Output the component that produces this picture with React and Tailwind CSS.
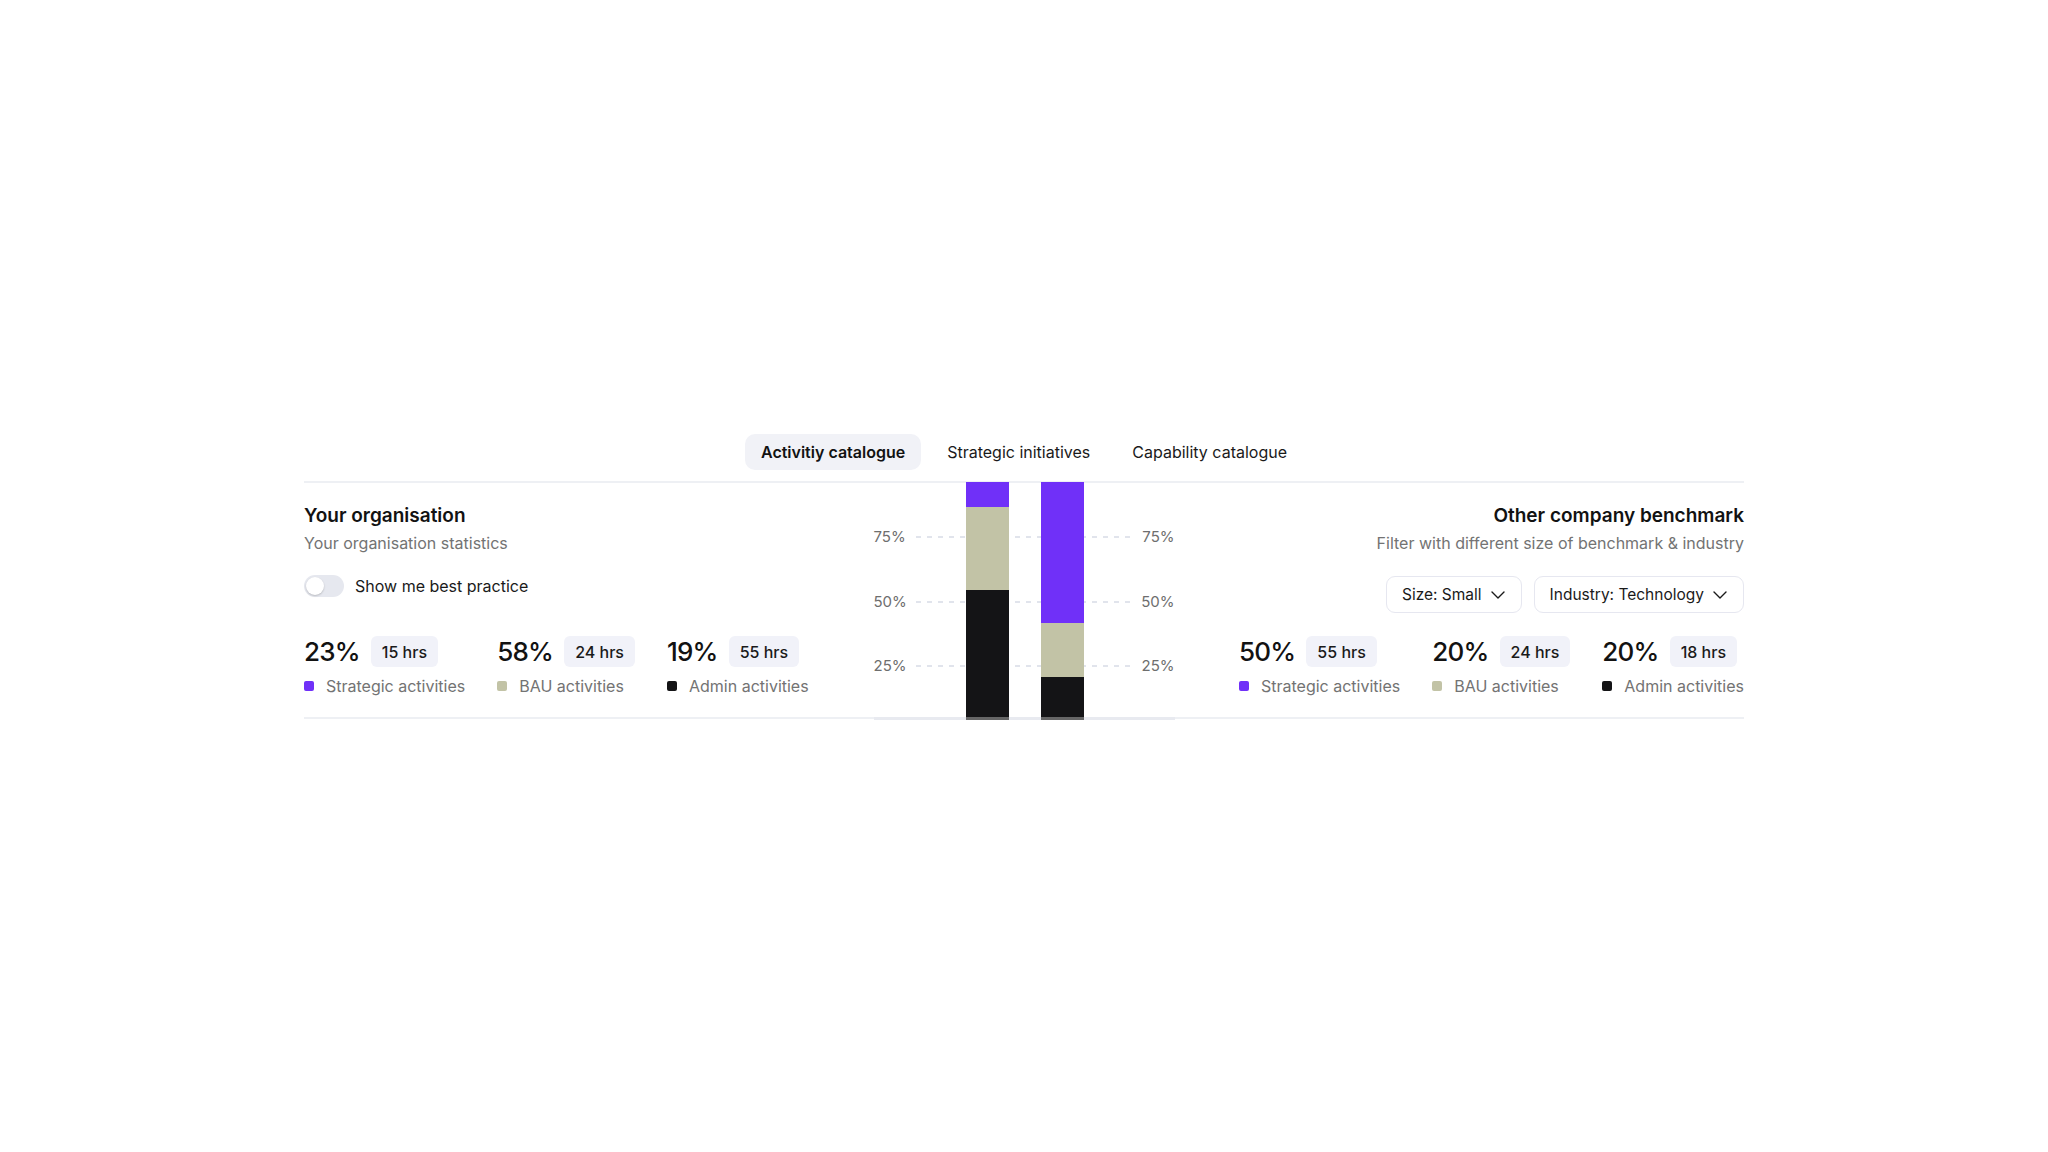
import React from "react";

const PURPLE = "bg-[#7030f8]";
const BEIGE = "bg-[#c2c3a6]";
const BLACK = "bg-[#141416]";

function ChevronDown() {
  return (
    <svg width="14" height="8" viewBox="0 0 14 8" fill="none" className="shrink-0">
      <path d="M1 1l6 6 6-6" stroke="#1a1a1a" strokeWidth="1.4" strokeLinecap="round" strokeLinejoin="round" />
    </svg>
  );
}

function Stat({ pct, hrs, label, color }) {
  return (
    <div className="flex flex-col">
      <div className="flex items-center gap-[11px] h-[31px]">
        <span className="text-[26px] font-medium tracking-[-0.03em] leading-none text-[#121212]">{pct}</span>
        <span className="h-[31px] px-[11px] rounded-[6px] bg-[#f1f2f9] flex items-center text-[16px] font-medium text-[#1a1a1a]">{hrs}</span>
      </div>
      <div className="mt-[9px] flex items-center gap-[12px] h-[20px]">
        <span className={`w-[10px] h-[10px] rounded-[2px] ${color}`} />
        <span className="text-[16px] leading-[20px] text-[#737373]">{label}</span>
      </div>
    </div>
  );
}

function Chart() {
  const rows = [
    { label: "75%", top: 44, line: 53 },
    { label: "50%", top: 109, line: 118 },
    { label: "25%", top: 173, line: 182 },
  ];
  return (
    <div className="relative w-[301px] shrink-0 self-stretch">
      {rows.map((r) => (
        <React.Fragment key={r.label}>
          <span className="absolute left-0 text-[15px] leading-[20px] text-[#6e6e6e]" style={{ top: r.top }}>{r.label}</span>
          <span className="absolute right-0 text-[15px] leading-[20px] text-[#6e6e6e]" style={{ top: r.top }}>{r.label}</span>
          <span
            className="absolute left-[42px] w-[218px] h-[2px] bg-[repeating-linear-gradient(90deg,#e1e4ec_0_5px,transparent_5px_11px)]"
            style={{ top: r.line }}
          />
        </React.Fragment>
      ))}
      <div className="absolute left-[92px] top-[-1px] bottom-0 w-[43px] flex flex-col">
        <div className={`h-[25px] ${PURPLE}`} />
        <div className={`h-[83px] ${BEIGE}`} />
        <div className={`flex-1 ${BLACK}`} />
      </div>
      <div className="absolute left-[167px] top-[-1px] bottom-0 w-[43px] flex flex-col">
        <div className={`h-[141px] ${PURPLE}`} />
        <div className={`h-[54px] ${BEIGE}`} />
        <div className={`flex-1 ${BLACK}`} />
      </div>
      <div className="absolute left-0 right-0 bottom-[-3px] h-[3px] bg-[#e8eaf0]" />
      <div className="absolute left-[92px] w-[43px] bottom-[-3px] h-[3px] bg-[#666]" />
      <div className="absolute left-[167px] w-[43px] bottom-[-3px] h-[3px] bg-[#666]" />
    </div>
  );
}

export default function App() {
  return (
    <div className="min-h-screen bg-white font-['Inter',sans-serif] text-[#121212]">
      <div className="w-[1440px] mx-auto pt-[434px]">
        <div className="flex justify-center gap-[10px]">
          <div className="h-[36px] px-4 rounded-[10px] bg-[#f1f2f7] flex items-center text-[16px] font-semibold text-[#121212]">Activitiy catalogue</div>
          <div className="h-[36px] px-4 rounded-[10px] flex items-center text-[16px] text-[#1a1a1a]">Strategic initiatives</div>
          <div className="h-[36px] px-4 rounded-[10px] flex items-center text-[16px] text-[#1a1a1a]">Capability catalogue</div>
        </div>
        <div className="mt-[11px] border-t-2 border-b-2 border-[#eef0f4] flex h-[238px]">
          <div className="flex-1 pt-[21px] flex flex-col">
            <h2 className="text-[19px] leading-[24px] font-semibold text-[#121212]">Your organisation</h2>
            <p className="mt-[5px] text-[16px] leading-[20px] text-[#737373]">Your organisation statistics</p>
            <div className="mt-[22px] h-[22px] flex items-center gap-[11px]">
              <div className="relative w-[40px] h-[22px] rounded-full bg-[#e6e8ef]">
                <div className="absolute left-[2px] top-[2px] w-[18px] h-[18px] rounded-full bg-white shadow-[0_1px_2px_rgba(0,0,0,0.2)]" />
              </div>
              <span className="text-[16px] text-[#1a1a1a]">Show me best practice</span>
            </div>
            <div className="mt-[39px] flex gap-[32px]">
              <Stat pct="23%" hrs="15 hrs" label="Strategic activities" color={PURPLE} />
              <Stat pct="58%" hrs="24 hrs" label="BAU activities" color={BEIGE} />
              <Stat pct="19%" hrs="55 hrs" label="Admin activities" color={BLACK} />
            </div>
          </div>
          <Chart />
          <div className="flex-1 pt-[21px] flex flex-col items-end">
            <h2 className="text-[19px] leading-[24px] font-semibold text-[#121212]">Other company benchmark</h2>
            <p className="mt-[5px] text-[16px] leading-[20px] text-[#737373]">Filter with different size of benchmark &amp; industry</p>
            <div className="mt-[23px] flex gap-[12px]">
              <div className="h-[37px] pl-[15px] pr-[16px] rounded-[9px] border border-[#e6e7f0] flex items-center gap-[9px] text-[15.5px] text-[#1a1a1a]">
                Size: Small <ChevronDown />
              </div>
              <div className="h-[37px] pl-[15px] pr-[16px] rounded-[9px] border border-[#e6e7f0] flex items-center gap-[9px] text-[15.5px] text-[#1a1a1a]">
                Industry: Technology <ChevronDown />
              </div>
            </div>
            <div className="mt-[23px] flex gap-[32px]">
              <Stat pct="50%" hrs="55 hrs" label="Strategic activities" color={PURPLE} />
              <Stat pct="20%" hrs="24 hrs" label="BAU activities" color={BEIGE} />
              <Stat pct="20%" hrs="18 hrs" label="Admin activities" color={BLACK} />
            </div>
          </div>
        </div>
      </div>
    </div>
  );
}
